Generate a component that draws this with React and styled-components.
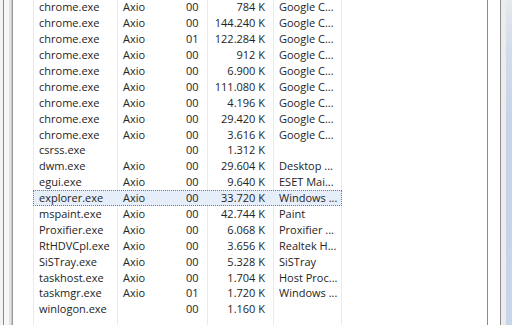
import React from "react";
import styled, { createGlobalStyle } from "styled-components";

const Global = createGlobalStyle`
  html, body { margin: 0; padding: 0; background: #f0f0f0; }
  body { font-family: "Open Sans", "Noto Sans", "Liberation Sans", sans-serif; }
`;

const Window = styled.div`
  display: flex;
  width: 512px;
  height: 325px;
  overflow: hidden;
  background: #f0f0f0;
`;

const LeftFrame = styled.div`
  width: 13px;
  flex: none;
  box-sizing: border-box;
  display: flex;
`;

const FrameStripe = styled.div`
  width: ${(p) => p.$w}px;
  background: ${(p) => p.$c};
`;

const ListPanel = styled.div`
  flex: none;
  width: 475px;
  box-sizing: border-box;
  background: #fff;
  border-right: 1px solid #8c8c8c;
  display: flex;
  flex-direction: column;
  overflow: hidden;
`;

const Rows = styled.div`
  display: flex;
  flex-direction: column;
  margin-top: -1px;
  flex: 1;
`;

const Row = styled.div`
  display: flex;
  margin-left: 20px;
  width: 309px;
  height: 15.9px;
  flex: none;
  box-sizing: border-box;
  align-items: center;
  font-size: 11px;
  color: #242424;
  background: ${(p) => (p.$selected ? "#e6eef9" : "transparent")};
  outline: ${(p) => (p.$selected ? "1px dotted #5c7ea8" : "none")};
  outline-offset: -1px;
  position: relative;
`;

const FillRow = styled(Row)`
  flex: 1;
  height: auto;
  align-items: stretch;
`;

const Cell = styled.div`
  box-sizing: border-box;
  height: 100%;
  display: flex;
  align-items: center;
  white-space: nowrap;
  overflow: hidden;
  width: ${(p) => p.$w}px;
  justify-content: ${(p) => (p.$right ? "flex-end" : "flex-start")};
  padding-left: ${(p) => p.$pl || 0}px;
  padding-right: ${(p) => p.$pr || 0}px;
  border-left: ${(p) => (p.$bl ? "1px solid" : "0")};
  border-right: ${(p) => (p.$br ? "1px solid" : "0")};
  border-color: ${(p) => (p.$sel ? "transparent" : "#e8ebef")};
`;

const Gap = styled.div`
  width: 12px;
  flex: none;
  background: #fff;
  border-right: 1px solid #8c8c8c;
`;

const RightFrame = styled.div`
  flex: 1;
  display: flex;
`;

const RightGray = styled.div`
  width: 5px;
  background: #ececec;
`;

const RightBlue = styled.div`
  flex: 1;
  background: linear-gradient(to bottom, #e6e9ee 0px, #d2dcea 50px, #c7d4e8 120px, #c9d6ea 325px);
`;

const data = [
  ["chrome.exe", "Axio", "00", "784 K", "Google C..."],
  ["chrome.exe", "Axio", "00", "144.240 K", "Google C..."],
  ["chrome.exe", "Axio", "01", "122.284 K", "Google C..."],
  ["chrome.exe", "Axio", "00", "912 K", "Google C..."],
  ["chrome.exe", "Axio", "00", "6.900 K", "Google C..."],
  ["chrome.exe", "Axio", "00", "111.080 K", "Google C..."],
  ["chrome.exe", "Axio", "00", "4.196 K", "Google C..."],
  ["chrome.exe", "Axio", "00", "29.420 K", "Google C..."],
  ["chrome.exe", "Axio", "00", "3.616 K", "Google C..."],
  ["csrss.exe", "", "00", "1.312 K", ""],
  ["dwm.exe", "Axio", "00", "29.604 K", "Desktop ..."],
  ["egui.exe", "Axio", "00", "9.640 K", "ESET Mai..."],
  ["explorer.exe", "Axio", "00", "33.720 K", "Windows ...", true],
  ["mspaint.exe", "Axio", "00", "42.744 K", "Paint"],
  ["Proxifier.exe", "Axio", "00", "6.068 K", "Proxifier ..."],
  ["RtHDVCpl.exe", "Axio", "00", "3.656 K", "Realtek H..."],
  ["SiSTray.exe", "Axio", "00", "5.328 K", "SiSTray"],
  ["taskhost.exe", "Axio", "00", "1.704 K", "Host Proc..."],
  ["taskmgr.exe", "Axio", "01", "1.720 K", "Windows ..."],
  ["winlogon.exe", "", "00", "1.160 K", ""],
];

function Cells({ r, sel }) {
  return (
    <>
      <Cell $w={85} $pl={5} $bl $br $sel={sel}>{r[0]}</Cell>
      <Cell $w={62} $pl={5} $sel={sel}>{r[1]}</Cell>
      <Cell $w={28} $pl={6} $br $sel={sel}>{r[2]}</Cell>
      <Cell $w={66} $pr={8} $right $br $sel={sel}>{r[3]}</Cell>
      <Cell $w={68} $pl={5} $br $sel={sel}>{r[4]}</Cell>
    </>
  );
}

export default function App() {
  return (
    <>
      <Global />
      <Window>
        <LeftFrame>
          <FrameStripe $w={3} $c="#f3f3f3" />
          <FrameStripe $w={1} $c="#8a8a8a" />
          <FrameStripe $w={5} $c="#f7f7f7" />
          <FrameStripe $w={2} $c="#e2e2e2" />
          <FrameStripe $w={1} $c="#c8c8c8" />
          <FrameStripe $w={1} $c="#9a9a9a" />
        </LeftFrame>
        <ListPanel>
          <Rows>
            {data.map((r, i) => (
              <Row key={i} $selected={!!r[5]}>
                <Cells r={r} sel={!!r[5]} />
              </Row>
            ))}
            <FillRow>
              <Cells r={["", "", "", "", ""]} />
            </FillRow>
          </Rows>
        </ListPanel>
        <Gap />
        <RightFrame>
          <RightGray />
          <RightBlue />
        </RightFrame>
      </Window>
    </>
  );
}
